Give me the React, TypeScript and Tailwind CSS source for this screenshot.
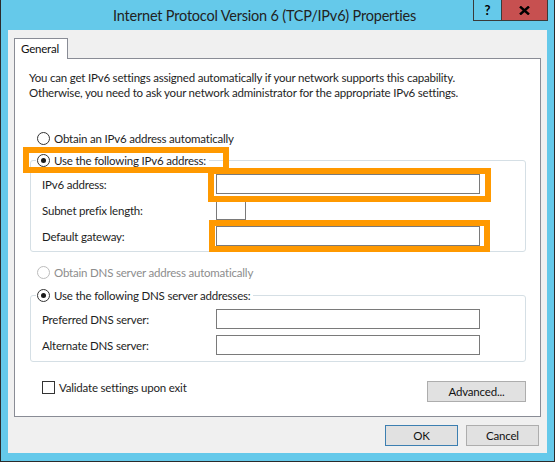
import React from "react";

function Radio({ checked, disabled }: { checked?: boolean; disabled?: boolean }) {
  return (
    <span
      className={`w-[13px] h-[13px] rounded-full border bg-white flex items-center justify-center shrink-0 ${
        disabled ? "border-[#bcbcbc]" : "border-[#333333]"
      }`}
    >
      {checked && <span className="w-[5px] h-[5px] rounded-full bg-[#1a1a1a]" />}
    </span>
  );
}

function Field({ label, w = "w-[264px]" }: { label: string; w?: string }) {
  return (
    <div className="flex items-center h-[20px]">
      <span className="w-[174px] leading-[15px]">{label}</span>
      <div className={`${w} h-[20px] border border-[#7a7a7a] bg-white`} />
    </div>
  );
}

export default function App() {
  return (
    <div className="relative w-[555px] h-[462px] bg-[#65c9ea] border-x border-b border-[#2b2b2b] flex flex-col font-['Lato',sans-serif] text-[11.5px] tracking-[-0.2px] text-[#1e1e1e] whitespace-nowrap">
      {/* Title bar */}
      <div className="h-[30px] flex items-start justify-between shrink-0">
        <div className="ml-[112px] mt-[6px] text-[14.5px] tracking-[-0.2px] leading-[20px] text-[#222]">
          Internet Protocol Version 6 (TCP/IPv6) Properties
        </div>
        <div className="flex mr-[6px]">
          <div className="w-[29px] h-[21px] border border-[#3a3a3a] border-t-0 flex items-center justify-center text-[13px] font-bold text-black leading-none">
            ?
          </div>
          <div className="w-[46px] h-[21px] bg-[#c75050] border border-l-0 border-t-0 border-[#3a3a3a] flex items-center justify-center">
            <svg width="11" height="9" viewBox="0 0 11 9">
              <path d="M1 0.5 L10 8.5 M10 0.5 L1 8.5" stroke="#000" strokeWidth="2.4" />
            </svg>
          </div>
        </div>
      </div>

      {/* Client area */}
      <div className="mx-[7px] h-[423px] bg-[#f0f0f0] px-[6px] pt-[8px] flex flex-col">
        {/* Tab */}
        <div className="relative z-10 -mb-px w-[54px] h-[21px] bg-white border border-b-0 border-[#898c95] pl-[6px] pt-[2px] leading-[15px] text-[#111]">
          General
        </div>
        {/* Panel */}
        <div className="h-[359px] border border-[#898c95] bg-white px-[14px] pt-[11px]">
          <p className="leading-[15px]">
            You can get IPv6 settings assigned automatically if your network supports this capability.
            <br />
            Otherwise, you need to ask your network administrator for the appropriate IPv6 settings.
          </p>

          <div className="mt-[31px] ml-[8px] flex items-center gap-[4px] h-[15px]">
            <Radio />
            <span className="leading-[15px]">Obtain an IPv6 address automatically</span>
          </div>

          <div className="relative mt-[14px] ml-[1px] w-[496px] border border-[#d5dfe5] rounded-[3px] pt-[13px] pb-[5px] pl-[11px] flex flex-col gap-[6px]">
            <div className="absolute -top-[8px] left-[5px] bg-white pl-[1px] pr-[3px] flex items-center gap-[4px] h-[15px]">
              <Radio checked />
              <span className="leading-[15px]">Use the following IPv6 address:</span>
            </div>
            <Field label="IPv6 address:" />
            <Field label="Subnet prefix length:" w="w-[30px]" />
            <Field label="Default gateway:" />
          </div>

          <div className="mt-[13px] ml-[8px] flex items-center gap-[4px] h-[15px] text-[#8d8d8d]">
            <Radio disabled />
            <span className="leading-[15px]">Obtain DNS server address automatically</span>
          </div>

          <div className="relative mt-[15px] ml-[1px] w-[496px] border border-[#d5dfe5] rounded-[3px] pt-[13px] pb-[6px] pl-[11px] flex flex-col gap-[6px]">
            <div className="absolute -top-[8px] left-[5px] bg-white pl-[1px] pr-[3px] flex items-center gap-[4px] h-[15px]">
              <Radio checked />
              <span className="leading-[15px]">Use the following DNS server addresses:</span>
            </div>
            <Field label="Preferred DNS server:" />
            <Field label="Alternate DNS server:" />
          </div>

          <div className="mt-[19px] flex justify-between items-start">
            <div className="ml-[13px] -mt-[1px] flex items-center gap-[4px] h-[15px]">
              <span className="w-[13px] h-[13px] border border-[#333333] bg-white" />
              <span className="leading-[15px]">Validate settings upon exit</span>
            </div>
            <button className="w-[99px] h-[21px] bg-[#e1e1e1] border border-[#adadad] leading-[15px] text-[#111]">
              Advanced...
            </button>
          </div>
        </div>

        {/* Bottom buttons */}
        <div className="mt-[8px] flex justify-end gap-[8px] pr-[2px]">
          <button className="w-[73px] h-[21px] bg-[#e1e1e1] border border-[#3c7fb1] leading-[15px] text-[#111]">
            OK
          </button>
          <button className="w-[73px] h-[21px] bg-[#e1e1e1] border border-[#adadad] leading-[15px] text-[#111]">
            Cancel
          </button>
        </div>
      </div>

      {/* Orange highlight annotations */}
      <div className="absolute left-[22px] top-[147px] w-[206px] h-[26px] border-[6px] border-[#ff9900] pointer-events-none" />
      <div className="absolute left-[207px] top-[168px] w-[283px] h-[34px] border-[6px] border-[#ff9900] pointer-events-none" />
      <div className="absolute left-[208px] top-[220px] w-[281px] h-[32px] border-[6px] border-[#ff9900] pointer-events-none" />
    </div>
  );
}
